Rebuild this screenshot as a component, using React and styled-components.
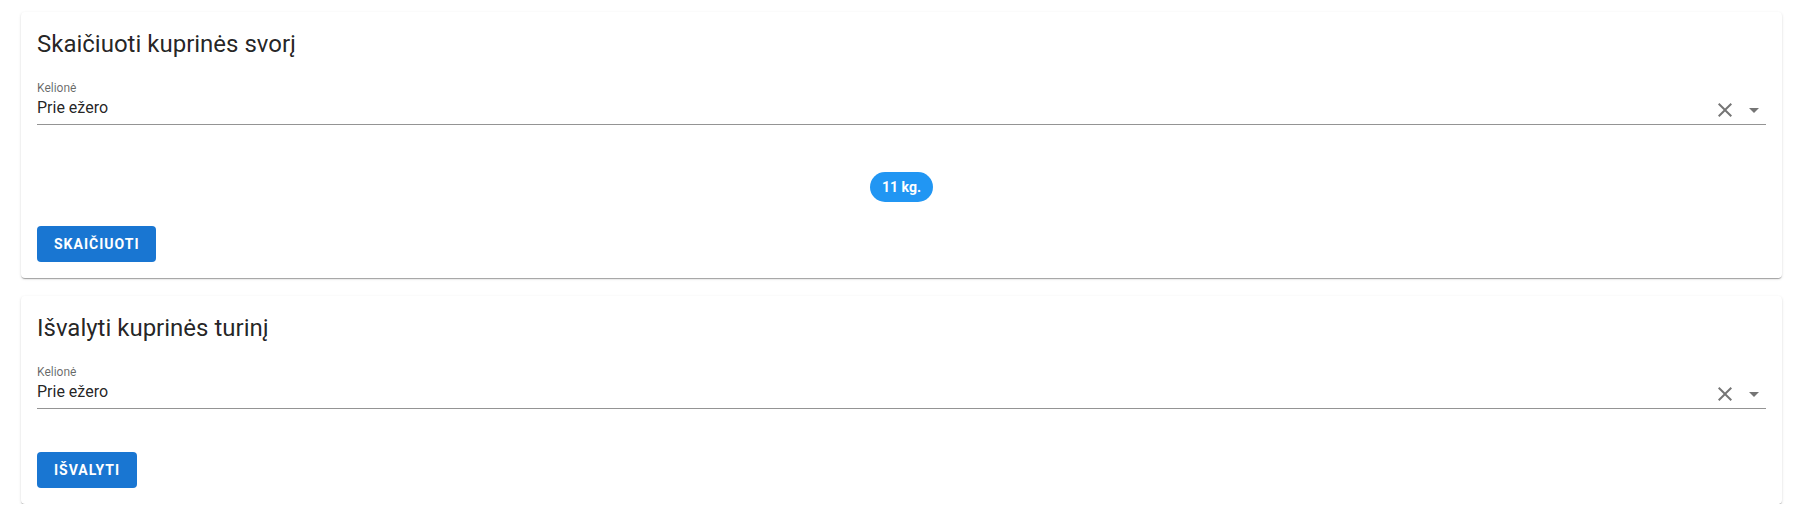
import React from 'react';
import styled, { createGlobalStyle } from 'styled-components';

const GlobalStyle = createGlobalStyle`
  html, body {
    margin: 0;
    padding: 0;
    background: #fff;
    font-family: Roboto, "Liberation Sans", Arial, sans-serif;
    color: rgba(0, 0, 0, 0.87);
    overflow: hidden;
  }
`;

const Page = styled.div`
  display: flex;
  flex-direction: column;
  gap: 18px;
  padding: 13px 17px 0 21px;
`;

const Card = styled.section`
  background: #fff;
  border-radius: 4px;
  box-shadow: 0px 2px 1px -1px rgba(0, 0, 0, 0.2), 0px 1px 1px 0px rgba(0, 0, 0, 0.14),
    0px 1px 3px 0px rgba(0, 0, 0, 0.12);
  padding: 16px 16px ${(p) => p.$bottom || 16}px;
  display: flex;
  flex-direction: column;
`;

const HiddenCard = styled(Card)`
  height: 60px;
  margin-top: -111px;
`;

const Title = styled.h2`
  margin: 0;
  font-size: 24px;
  font-weight: 400;
  line-height: 32px;
  letter-spacing: 0;
`;

const Field = styled.div`
  margin-top: 20px;
  display: flex;
  flex-direction: column;
`;

const Label = styled.label`
  font-size: 12px;
  line-height: 16px;
  color: rgba(0, 0, 0, 0.6);
`;

const InputRow = styled.div`
  display: flex;
  align-items: center;
  height: 24px;
  padding: 0 0 4px;
  border-bottom: 1px solid rgba(0, 0, 0, 0.42);
`;

const Value = styled.span`
  flex: 1;
  font-size: 16px;
  line-height: 24px;
`;

const Icons = styled.div`
  display: flex;
  align-items: center;
  gap: 5px;
  margin-top: 3px;
  color: rgba(0, 0, 0, 0.54);
  svg {
    width: 24px;
    height: 24px;
    fill: currentColor;
    display: block;
  }
`;

const ChipRow = styled.div`
  display: flex;
  justify-content: center;
  margin-top: 47px;
`;

const Chip = styled.span`
  height: 30px;
  padding: 0 12px;
  border-radius: 15px;
  background: #2196f3;
  color: #fff;
  font-size: 14px;
  font-weight: 700;
  display: inline-flex;
  align-items: center;
`;

const Button = styled.button`
  align-self: flex-start;
  margin-top: ${(p) => p.$top}px;
  height: 36px;
  padding: 0 17px;
  border: none;
  border-radius: 4px;
  background: #1976d2;
  color: #fff;
  font-family: Roboto, "Liberation Sans", Arial, sans-serif;
  font-size: 14px;
  font-weight: 700;
  letter-spacing: 1px;
  text-transform: uppercase;
`;

const ClearIcon = () => (
  <svg viewBox="0 0 24 24">
    <path d="M19 6.41 17.59 5 12 10.59 6.41 5 5 6.41 10.59 12 5 17.59 6.41 19 12 13.41 17.59 19 19 17.59 13.41 12z" />
  </svg>
);

const ArrowDropDown = () => (
  <svg viewBox="0 0 24 24">
    <path d="M7 10l5 5 5-5z" />
  </svg>
);

const TripSelect = ({ value }) => (
  <Field>
    <Label>Kelionė</Label>
    <InputRow>
      <Value>{value}</Value>
      <Icons>
        <ClearIcon />
        <ArrowDropDown />
      </Icons>
    </InputRow>
  </Field>
);

export default function App() {
  return (
    <>
      <GlobalStyle />
      <Page>
        <HiddenCard />
        <Card $bottom={16}>
          <Title>Skaičiuoti kuprinės svorį</Title>
          <TripSelect value="Prie ežero" />
          <ChipRow>
            <Chip>11 kg.</Chip>
          </ChipRow>
          <Button $top={24}>Skaičiuoti</Button>
        </Card>
        <Card>
          <Title>Išvalyti kuprinės turinį</Title>
          <TripSelect value="Prie ežero" />
          <Button $top={43}>Išvalyti</Button>
        </Card>
      </Page>
    </>
  );
}
